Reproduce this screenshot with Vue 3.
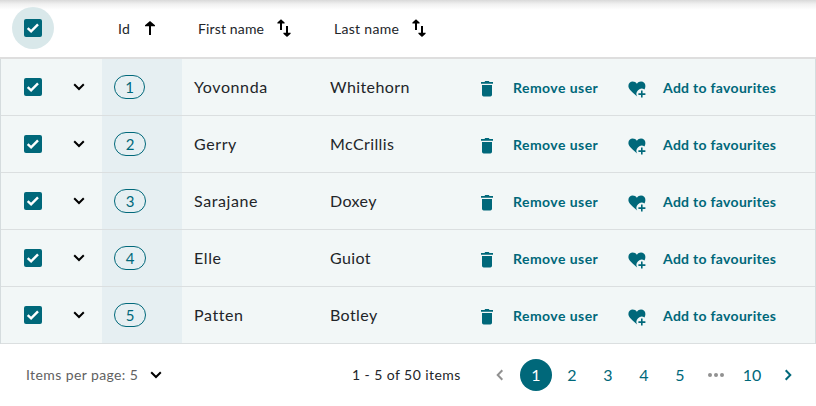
<script setup>
import { ref } from 'vue'

const users = ref([
  { id: 1, first: 'Yovonnda', last: 'Whitehorn' },
  { id: 2, first: 'Gerry', last: 'McCrillis' },
  { id: 3, first: 'Sarajane', last: 'Doxey' },
  { id: 4, first: 'Elle', last: 'Guiot' },
  { id: 5, first: 'Patten', last: 'Botley' },
])
const pages = [2, 3, 4, 5]
</script>

<template>
  <main class="table">
    <header class="row head">
      <div class="cell select">
        <span class="halo">
          <svg class="check" viewBox="0 0 18 18"><rect width="18" height="18" rx="2" /><path d="M3.7 9.2 7.1 12.4 14 5.3" /></svg>
        </span>
      </div>
      <div class="cell expand"></div>
      <div class="cell id">
        <span>Id</span>
        <svg class="sort asc" viewBox="0 0 12 14"><path d="M5 14V5.2H1V4.2L6 0l5 4.2v1H7V14z" /></svg>
      </div>
      <div class="cell name first">
        <span>First name</span>
        <svg class="sort both" viewBox="0 0 14 18"><path d="M4 0.2 7.6 3.4V4.4H5V11H3V4.4H0.4V3.4zM9 7h2v6.8h2.6v1L10 18l-3.6-3.2v-1H9z" /></svg>
      </div>
      <div class="cell name">
        <span>Last name</span>
        <svg class="sort both" viewBox="0 0 14 18"><path d="M4 0.2 7.6 3.4V4.4H5V11H3V4.4H0.4V3.4zM9 7h2v6.8h2.6v1L10 18l-3.6-3.2v-1H9z" /></svg>
      </div>
    </header>

    <section class="body">
      <div v-for="user in users" :key="user.id" class="row">
        <div class="cell select">
          <svg class="check" viewBox="0 0 18 18"><rect width="18" height="18" rx="2" /><path d="M3.7 9.2 7.1 12.4 14 5.3" /></svg>
        </div>
        <div class="cell expand">
          <svg class="chevron" viewBox="0 0 12 8"><path d="M1.2 1.3 6 6l4.8-4.7" /></svg>
        </div>
        <div class="cell id"><span class="badge" :class="{ slim: user.id === 1 }">{{ user.id }}</span></div>
        <div class="cell name first">{{ user.first }}</div>
        <div class="cell name">{{ user.last }}</div>
        <div class="cell action remove">
          <svg class="trash" viewBox="0 0 12 16"><path d="M0 .9h3.5L4.2 0h3.6l.7.9H12v1.8H0zM1 4h10v9.8Q11 15.5 9.3 15.5H2.7Q1 15.5 1 13.8z" /></svg>
          <span>Remove user</span>
        </div>
        <div class="cell action favourite">
          <svg class="heart" viewBox="0 0 18 17"><path d="M9.2 15.6 7.4 14C2.8 9.8.4 7.6.4 4.9.4 2.4 2.3.6 4.7.6c1.7 0 3.2.8 4.2 2.2C9.9 1.4 11.3.6 13 .6c2.5 0 4.4 1.8 4.4 4.3 0 1.4-.3 2.4-.9 3.5A5.3 5.3 0 0 0 9.2 15.6z" /><path d="M13 9.6h1.6v2.7h2.8v1.6h-2.8v2.7H13v-2.7h-2.6v-1.6H13z" /></svg>
          <span>Add to favourites</span>
        </div>
      </div>
    </section>

    <footer class="pagination">
      <div class="per-page">
        <span>Items per page: 5</span>
        <svg class="chevron" viewBox="0 0 12 8"><path d="M1.2 1.3 6 6l4.8-4.7" /></svg>
      </div>
      <span class="range">1 - 5 of 50 items</span>
      <nav class="pages">
        <span class="page prev"><svg viewBox="0 0 8 12"><path d="M6.3 1.2 1.7 6l4.6 4.8" /></svg></span>
        <span class="page number current">1</span>
        <span v-for="page in pages" :key="page" class="page number">{{ page }}</span>
        <span class="page dots"><i></i><i></i><i></i></span>
        <span class="page number">10</span>
        <span class="page next"><svg viewBox="0 0 8 12"><path d="M1.7 1.2 6.3 6l-4.6 4.8" /></svg></span>
      </nav>
    </footer>
  </main>
</template>

<style>
body {
  background: #fff;
}
</style>

<style scoped>
.table {
  width: 816px;
  height: 406px;
  box-sizing: border-box;
  overflow: hidden;
  font-family: Lato, "Liberation Sans", sans-serif;
  font-size: 16px;
  color: #222529;
}
.row {
  display: grid;
  grid-template-columns: 65px 36px 80px 136px 148px 150px 1fr;
  height: 57px;
  box-sizing: border-box;
  border-bottom: 1px solid #dbdfe0;
}
.head {
  height: 59px;
  padding-left: 1px;
  border-bottom: 2px solid #dedede;
  background: linear-gradient(#d9d9d9, #f0f0f0 4px, #fff 10px);
  font-size: 14px;
  letter-spacing: 0.3px;
}
.body {
  background: #f2f7f7;
  border: solid #d5dcde;
  border-width: 0 1px;
}
.cell {
  display: flex;
  align-items: center;
  box-sizing: border-box;
  min-width: 0;
  white-space: nowrap;
}
.select {
  padding-left: 23px;
}
.head .select {
  padding-left: 11px;
}
.head .cell {
  padding-bottom: 1px;
}
.check {
  width: 18px;
  height: 18px;
}
.check rect {
  fill: #00687a;
}
.check path {
  fill: none;
  stroke: #fff;
  stroke-width: 2.4;
}
.halo {
  display: flex;
  align-items: center;
  justify-content: center;
  width: 42px;
  height: 42px;
  border-radius: 50%;
  background: #d9e8ea;
}
.chevron {
  width: 12px;
  height: 8px;
}
.expand {
  padding-left: 7px;
}
.chevron path,
.page svg path {
  fill: none;
  stroke: #000;
  stroke-width: 2;
}
.id {
  padding-left: 12px;
}
.head .id {
  padding-left: 16px;
  gap: 14px;
}
.body .id {
  background: #e6eff2;
}
.badge {
  display: flex;
  align-items: center;
  justify-content: center;
  width: 32px;
  height: 24px;
  padding-bottom: 1px;
  box-sizing: border-box;
  border: 1px solid #00687a;
  border-radius: 12px;
  color: #00687a;
  font-size: 15px;
}
.badge.slim {
  width: 31px;
}
.name {
  padding-left: 12px;
  letter-spacing: 0.4px;
}
.body .name {
  padding-bottom: 2px;
}
.body .name.first {
  letter-spacing: 0.6px;
}
.head .name {
  padding-left: 16px;
  gap: 13px;
  letter-spacing: 0.3px;
}
.head .name.first {
  letter-spacing: 0.15px;
  gap: 12.5px;
}
.sort.asc {
  width: 12px;
  height: 14px;
}
.sort.both {
  width: 14px;
  height: 18px;
}
.action {
  padding-left: 15px;
  color: #00687a;
  font-size: 14px;
  font-weight: 700;
  letter-spacing: 0.45px;
}
.trash {
  width: 12px;
  height: 16px;
  margin: 3px 20px 0 0;
  fill: currentColor;
}
.heart {
  width: 18px;
  height: 17px;
  margin: 4px 17px 0 0;
  fill: currentColor;
}
.favourite {
  padding-left: 12px;
  letter-spacing: 0.3px;
}
.pagination {
  display: flex;
  align-items: center;
  height: 62px;
  padding-left: 26px;
}
.per-page {
  display: flex;
  align-items: center;
  gap: 12px;
  width: 326px;
  color: #616161;
  font-size: 14px;
  letter-spacing: 0.4px;
}
.per-page span,
.range {
  padding-bottom: 2px;
}
.range {
  width: 132px;
  box-sizing: border-box;
  font-size: 14px;
  letter-spacing: 0.43px;
}
.pages {
  display: flex;
  gap: 4px;
}
.page {
  display: flex;
  align-items: center;
  justify-content: center;
  width: 32px;
  height: 32px;
  box-sizing: border-box;
  border-radius: 50%;
  color: #00687a;
}
.number {
  padding-bottom: 1px;
}
.page svg {
  width: 8px;
  height: 12px;
}
.page.prev svg path {
  stroke: #919191;
}
.page.next svg path {
  stroke: #00687a;
}
.current {
  background: #00687a;
  color: #fff;
}
.dots {
  gap: 2px;
}
.dots i {
  width: 4px;
  height: 4px;
  border-radius: 50%;
  background: #919191;
}
</style>
